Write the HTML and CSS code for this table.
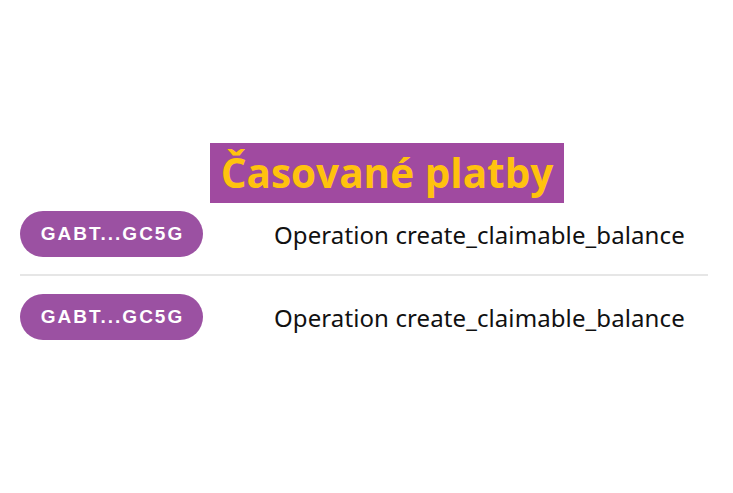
FILE: index.html
```html
<!DOCTYPE html>
<html>
<head>
<meta charset="utf-8">
<link rel="stylesheet" href="styles.css">
</head>
<body>
<div class="page">
  <div class="title-wrap"><h1 class="title">Časované platby</h1></div>
  <div class="list">
    <div class="row">
      <span class="pill">GABT...GC5G</span>
      <span class="op">Operation create_claimable_balance</span>
    </div>
    <div class="row">
      <span class="pill">GABT...GC5G</span>
      <span class="op">Operation create_claimable_balance</span>
    </div>
  </div>
</div>
</body>
</html>
```
FILE: styles.css
```css
html, body { margin: 0; padding: 0; background: #fff; }
.page { padding: 143px 25px 0 20px; }
.title-wrap { display: flex; justify-content: center; padding-left: 46px; }
.title {
  margin: 0;
  background: #a04aa0;
  color: #ffc20e;
  font-family: "Open Sans", sans-serif;
  font-weight: 700;
  font-size: 40.5px;
  line-height: 60px;
  padding: 0 11px;
}
.list { display: flex; flex-direction: column; margin-top: 8px; }
.row {
  display: flex;
  align-items: center;
  padding: 0 0 17px 0;
}
.row + .row { border-top: 2px solid #e6e6e6; padding-top: 18px; }
.pill {
  background: #9b51a2;
  color: #fff;
  font-family: "Liberation Sans", Arial, sans-serif;
  font-weight: 700;
  font-size: 19px;
  letter-spacing: 2px;
  border-radius: 23px;
  height: 46px;
  width: 183px;
  display: flex;
  align-items: center;
  justify-content: center;
  box-sizing: border-box;
  padding-left: 2px;
}
.op {
  margin-left: 71px;
  font-family: "Noto Sans", sans-serif;
  font-size: 24px;
  color: #111;
  letter-spacing: 0.1px;
}
```
